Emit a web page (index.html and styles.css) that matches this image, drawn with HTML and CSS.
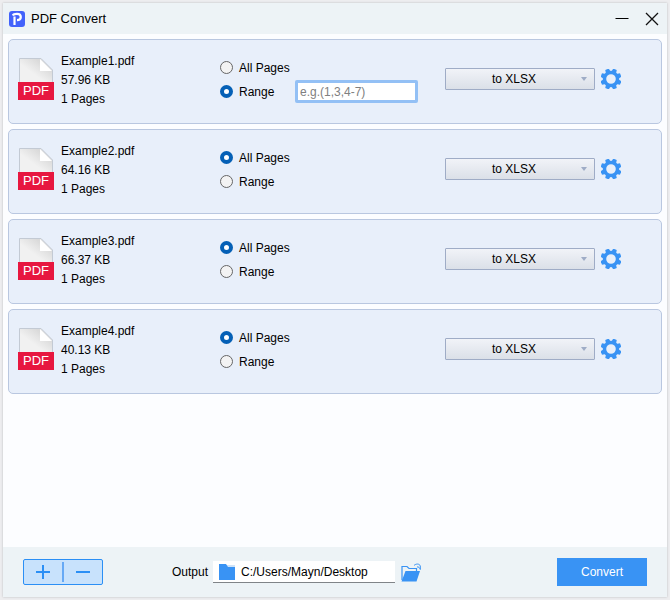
FILE: index.html
```html
<!DOCTYPE html>
<html lang="en">
<head>
    <meta charset="UTF-8">
    <meta name="viewport" content="width=device-width, initial-scale=1.0">
    <title>PDF Convert</title>
    <link rel="stylesheet" href="styles.css">
</head>
<body>
    <!-- shared icons -->
    <svg class="sprite" aria-hidden="true">
        <defs>
            <linearGradient id="sheet" x1="0" y1="1" x2="1" y2="0">
                <stop offset="0.4" stop-color="#f1f1f1"/>
                <stop offset="0.75" stop-color="#dadada"/>
            </linearGradient>
        </defs>
        <symbol id="icon-sheet" viewBox="0 0 36 24">
            <path d="M1.500 25V0.500H23L34.500 12V25Z" fill="url(#sheet)" stroke="#c3cad4"/>
            <path d="M22 1L34 13H22Z" fill="#fff"/>
        </symbol>
        <symbol id="icon-gear" viewBox="0 0 20 20">
            <circle cx="10" cy="10" r="6.500" fill="none" stroke="#3993f4" stroke-width="3.400"/>
            <g fill="#3993f4">
                <path id="tooth" d="M7.400 3.500L8.100 -0.500H11.900L12.600 3.500Z" transform="rotate(22.500 10 10)"/>
                <use href="#tooth" transform="rotate(45 10 10)"/>
                <use href="#tooth" transform="rotate(90 10 10)"/>
                <use href="#tooth" transform="rotate(135 10 10)"/>
                <use href="#tooth" transform="rotate(180 10 10)"/>
                <use href="#tooth" transform="rotate(225 10 10)"/>
                <use href="#tooth" transform="rotate(270 10 10)"/>
                <use href="#tooth" transform="rotate(315 10 10)"/>
            </g>
        </symbol>
    </svg>

    <div class="window">
        <header class="titlebar">
            <svg class="logo" viewBox="0 0 16 16" aria-hidden="true">
                <rect width="16" height="16" rx="3" fill="#4262fb"/>
                <path d="M5.500 14V5.500M3.800 4.500C4.500 3 6 2.800 8 2.800C10.500 2.800 11.800 4 11.800 6C11.800 8.200 10.500 9.200 8 9.200" fill="none" stroke="#fff" stroke-width="2.200"/>
            </svg>
            <h1>PDF Convert</h1>
            <button class="win-btn" aria-label="Minimize">
                <svg viewBox="0 0 14 14"><path d="M0.500 6.500H13.500" stroke="#000"/></svg>
            </button>
            <button class="win-btn" aria-label="Close">
                <svg viewBox="0 0 14 14"><path d="M1 1L13 13M13 1L1 13" stroke="#111" stroke-width="1.300"/></svg>
            </button>
        </header>

        <main class="files">
            <section class="card">
                <div class="pdf"><svg><use href="#icon-sheet"/></svg><span>PDF</span></div>
                <div class="info">
                    <p>Example1.pdf</p>
                    <p>57.96 KB</p>
                    <p>1 Pages</p>
                </div>
                <div class="pages">
                    <label><input type="radio" name="pages1">All Pages</label>
                    <div class="range">
                        <label><input type="radio" name="pages1" checked>Range</label>
                        <input type="text" class="range-input" placeholder="e.g.(1,3,4-7)" aria-label="Page range">
                    </div>
                </div>
                <div class="format">
                    <select aria-label="Output format"><option>to XLSX</option></select>
                </div>
                <button class="gear" aria-label="Settings"><svg><use href="#icon-gear"/></svg></button>
            </section>

            <section class="card">
                <div class="pdf"><svg><use href="#icon-sheet"/></svg><span>PDF</span></div>
                <div class="info">
                    <p>Example2.pdf</p>
                    <p>64.16 KB</p>
                    <p>1 Pages</p>
                </div>
                <div class="pages">
                    <label><input type="radio" name="pages2" checked>All Pages</label>
                    <label><input type="radio" name="pages2">Range</label>
                </div>
                <div class="format">
                    <select aria-label="Output format"><option>to XLSX</option></select>
                </div>
                <button class="gear" aria-label="Settings"><svg><use href="#icon-gear"/></svg></button>
            </section>

            <section class="card">
                <div class="pdf"><svg><use href="#icon-sheet"/></svg><span>PDF</span></div>
                <div class="info">
                    <p>Example3.pdf</p>
                    <p>66.37 KB</p>
                    <p>1 Pages</p>
                </div>
                <div class="pages">
                    <label><input type="radio" name="pages3" checked>All Pages</label>
                    <label><input type="radio" name="pages3">Range</label>
                </div>
                <div class="format">
                    <select aria-label="Output format"><option>to XLSX</option></select>
                </div>
                <button class="gear" aria-label="Settings"><svg><use href="#icon-gear"/></svg></button>
            </section>

            <section class="card">
                <div class="pdf"><svg><use href="#icon-sheet"/></svg><span>PDF</span></div>
                <div class="info">
                    <p>Example4.pdf</p>
                    <p>40.13 KB</p>
                    <p>1 Pages</p>
                </div>
                <div class="pages">
                    <label><input type="radio" name="pages4" checked>All Pages</label>
                    <label><input type="radio" name="pages4">Range</label>
                </div>
                <div class="format">
                    <select aria-label="Output format"><option>to XLSX</option></select>
                </div>
                <button class="gear" aria-label="Settings"><svg><use href="#icon-gear"/></svg></button>
            </section>
        </main>

        <footer class="bottom">
            <div class="add-remove">
                <button aria-label="Add file">
                    <svg viewBox="0 0 14 14"><path d="M0 7H14M7 0V14" stroke="#2b8ff5" stroke-width="2"/></svg>
                </button>
                <span class="divider"></span>
                <button aria-label="Remove file">
                    <svg viewBox="0 0 14 14"><path d="M0 7H14" stroke="#2b8ff5" stroke-width="2"/></svg>
                </button>
            </div>
            <div class="output">
                <label for="path">Output</label>
                <div class="path-box">
                    <svg viewBox="0 0 16 16" aria-hidden="true">
                        <path d="M7 1H16V5H7Z" fill="#cfe3f8"/>
                        <path d="M0 0H7L9 3H16V16H0Z" fill="#3993f4"/>
                    </svg>
                    <input type="text" id="path" value="C:/Users/Mayn/Desktop">
                </div>
                <button class="browse" aria-label="Browse">
                    <svg viewBox="0 0 20 19">
                        <path d="M1 17V3.500H6L8 5.500H15.500V8" fill="none" stroke="#3993f4" stroke-width="1.200"/>
                        <path d="M4.500 8H19L15.500 18.500H0.500Z" fill="#3993f4"/>
                        <path d="M13 2.500C15 0.500 18.500 0.500 19.300 3V6.500M16 4C17.500 3.500 18.500 4.500 19.300 6.500" fill="none" stroke="#3993f4"/>
                    </svg>
                </button>
            </div>
            <button class="convert">Convert</button>
        </footer>
    </div>
</body>
</html>
```
FILE: styles.css
```css
* {
    box-sizing: border-box;
}

body {
    display: flex;
    min-height: 100vh;
    margin: 0;
    padding: 3px;
    background: #ededef;
    color: #000;
    font-family: "Liberation Sans", Arial, sans-serif;
    font-size: 12px;
}

button,
input,
select {
    margin: 0;
    font: inherit;
    color: inherit;
}

button {
    display: flex;
    align-items: center;
    justify-content: center;
    padding: 0;
    border: none;
    background: none;
    cursor: pointer;
}

h1,
p {
    margin: 0;
    font-size: 12px;
    font-weight: normal;
}

.sprite {
    position: absolute;
    width: 0;
    height: 0;
}

.window {
    display: flex;
    flex: 1;
    flex-direction: column;
    background: #fcfdff;
    box-shadow: 0 0 2px #b8babd;
}

/* title bar */
.titlebar {
    display: flex;
    align-items: center;
    height: 31px;
    padding: 0 8px 0 6px;
    background: #edf3f6;
}

.logo {
    width: 16px;
    height: 16px;
    margin-right: 6px;
}

.titlebar h1 {
    flex: 1;
    font-size: 13px;
}

.win-btn {
    width: 14px;
    height: 14px;
    margin-left: 16px;
}

.win-btn svg {
    width: 14px;
    height: 14px;
}

/* file list */
.files {
    display: flex;
    flex: 1;
    flex-direction: column;
    gap: 5px;
    padding: 5px;
}

.card {
    display: flex;
    height: 85px;
    padding: 0 40px 0 9px;
    border: 1px solid #b9c7e0;
    border-radius: 5px;
    background: #e8effa;
}

.pdf {
    width: 36px;
    margin-top: 18px;
}

.pdf svg {
    display: block;
    width: 36px;
    height: 24px;
}

.pdf span {
    display: block;
    background: #e7173f;
    color: #fff;
    font-size: 13px;
    line-height: 18px;
    text-align: center;
}

.info {
    width: 159px;
    margin: 12px 0 0 7px;
    line-height: 19px;
}

.pages {
    display: flex;
    flex: 1;
    flex-direction: column;
    margin-top: 16px;
    line-height: 24px;
}

.pages label {
    display: flex;
    align-items: center;
    height: 24px;
}

.range {
    display: flex;
}

.range label {
    width: 75px;
}

input[type="radio"] {
    appearance: none;
    width: 13px;
    height: 13px;
    margin: 0 6px 2px 0;
    border: 1px solid #666;
    border-radius: 50%;
    background: #f3f3f3;
}

input[type="radio"]:checked {
    border: 4px solid #0560b6;
    background: #fff;
}

.range-input {
    width: 123px;
    height: 23px;
    padding: 0 2px;
    border: 3px solid #93c0f5;
    border-radius: 2px;
    background: #fff;
    outline: none;
}

.range-input::placeholder {
    color: #808080;
}

.format {
    position: relative;
    width: 150px;
    margin-top: 28px;
}

.format select {
    appearance: none;
    width: 150px;
    height: 22px;
    padding: 0 12px 0 0;
    border: 1px solid #9facc6;
    border-radius: 1px;
    background: linear-gradient(#f1f3f8, #dbe0e8);
    text-align: center;
    text-align-last: center;
}

.format::after {
    content: "";
    position: absolute;
    top: 9px;
    right: 8px;
    border: 3px solid transparent;
    border-top: 4px solid #9facc6;
    border-bottom: none;
    pointer-events: none;
}

.gear {
    width: 20px;
    height: 20px;
    margin: 29px 0 0 6px;
}

.gear svg {
    width: 20px;
    height: 20px;
}

/* bottom bar */
.bottom {
    display: flex;
    align-items: center;
    height: 50px;
    padding: 0 20px;
    background: #edf3f6;
}

.add-remove {
    display: flex;
    align-items: center;
    width: 80px;
    height: 26px;
    border: 1px solid #2b8ff5;
    border-radius: 2px;
    background: #c8e2fc;
}

.add-remove button {
    flex: 1;
    height: 24px;
}

.add-remove svg {
    width: 14px;
    height: 14px;
}

.divider {
    width: 2px;
    height: 20px;
    background: #66a9f5;
}

.output {
    display: flex;
    align-items: center;
    margin-left: 69px;
}

.path-box {
    display: flex;
    align-items: center;
    width: 182px;
    height: 22px;
    margin: 0 6px 0 5px;
    padding-left: 6px;
    border-bottom: 1px solid #808488;
    background: #fff;
}

.path-box svg {
    width: 16px;
    height: 16px;
}

.path-box input {
    flex: 1;
    min-width: 0;
    padding: 0 0 0 6px;
    border: none;
    background: none;
    outline: none;
}

.browse svg {
    width: 20px;
    height: 19px;
}

.convert {
    width: 90px;
    height: 28px;
    margin-left: auto;
    background: #3993f4;
    color: #fff;
}
```
